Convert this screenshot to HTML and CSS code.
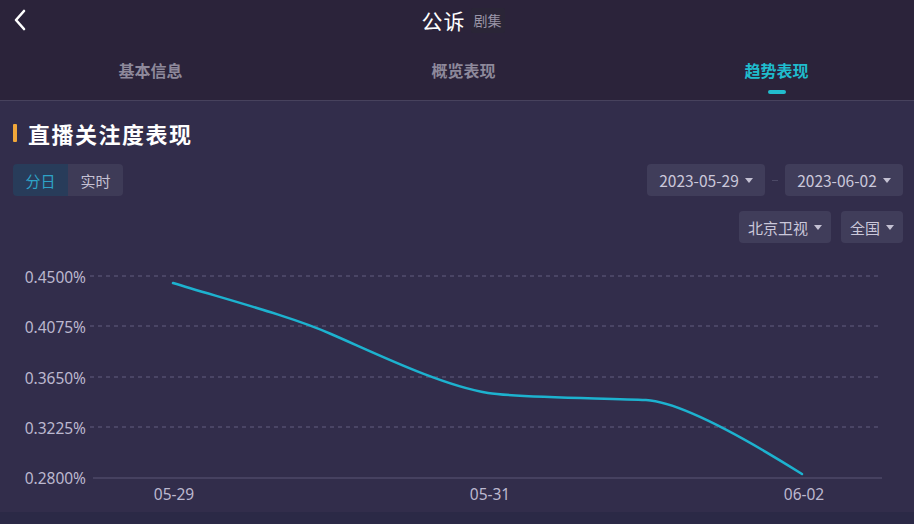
FILE: index.html
```html
<!DOCTYPE html>
<html lang="zh">
<head>
<meta charset="utf-8">
<title>公诉 趋势表现</title>
<link rel="stylesheet" href="styles.css">
</head>
<body>
<div class="page">
  <header class="topbar">
    <div class="nav">
      <div class="nav-left">
        <svg class="back" width="14" height="22" viewBox="0 0 14 22"><path d="M11 2 L3 11 L11 20" fill="none" stroke="#ffffff" stroke-width="2.6" stroke-linecap="round" stroke-linejoin="round"/></svg>
      </div>
      <div class="nav-title">
        <span class="title">公诉</span><span class="tag">剧集</span>
      </div>
      <div class="nav-right"></div>
    </div>
    <nav class="tabs">
      <div class="tab"><span class="tab-text">基本信息</span></div>
      <div class="tab"><span class="tab-text">概览表现</span></div>
      <div class="tab active"><span class="tab-text">趋势表现</span><span class="indicator"></span></div>
    </nav>
  </header>

  <main class="content">
    <h2 class="section-title"><span class="bar"></span>直播关注度表现</h2>

    <div class="row">
      <div class="segmented">
        <span class="seg active">分日</span>
        <span class="seg">实时</span>
      </div>
      <div class="pickers">
        <span class="picker date">2023-05-29<i class="caret"></i></span>
        <span class="dash"></span>
        <span class="picker date">2023-06-02<i class="caret"></i></span>
      </div>
    </div>

    <div class="row row2">
      <div class="pickers">
        <span class="picker">北京卫视<i class="caret"></i></span>
        <span class="picker">全国<i class="caret"></i></span>
      </div>
    </div>

    <svg class="chart" width="914" height="269" viewBox="0 0 914 269">
      <g class="grid">
        <line x1="90" y1="33" x2="882" y2="33"/>
        <line x1="90" y1="83" x2="882" y2="83"/>
        <line x1="90" y1="134" x2="882" y2="134"/>
        <line x1="90" y1="184" x2="882" y2="184"/>
      </g>
      <line class="axis" x1="93" y1="235" x2="882" y2="235"/>
      <g class="ylabels">
        <text x="86" y="40">0.4500%</text>
        <text x="86" y="90">0.4075%</text>
        <text x="86" y="141">0.3650%</text>
        <text x="86" y="191">0.3225%</text>
        <text x="86" y="241">0.2800%</text>
      </g>
      <g class="xlabels">
        <text x="174" y="257">05-29</text>
        <text x="490" y="257">05-31</text>
        <text x="804" y="257">06-02</text>
      </g>
      <path class="line" d="M173,40 C225,56 290,73 331,91 C375,110 440,142 488,150 C520,155 610,155 646,157 C680,159 740,192 802,231"/>
    </svg>
  </main>
  <div class="bottom"></div>
</div>
</body>
</html>
```

FILE: styles.css
```css
* { box-sizing: border-box; }
html, body { margin: 0; padding: 0; }
body {
  width: 914px;
  height: 524px;
  overflow: hidden;
  background: #322d4b;
  font-family: "Noto Sans CJK SC", "Noto Sans", sans-serif;
}
.page { width: 914px; height: 524px; display: flex; flex-direction: column; }

.topbar {
  background: #2b233a;
  border-bottom: 1px solid #47425d;
  height: 101px;
}
.nav {
  height: 44px;
  display: grid;
  grid-template-columns: 1fr auto 1fr;
  align-items: center;
}
.nav-left { padding-left: 13px; display: flex; align-items: center; padding-bottom: 4px; }
.back { display: block; }
.nav-title { display: flex; align-items: center; margin-left: 12px; padding-bottom: 4px; }
.title { color: #ffffff; font-size: 21px; line-height: 28px; letter-spacing: 1px; }
.tag {
  margin-left: 5px;
  background: #2a2537;
  color: #9a95a8;
  font-size: 14px;
  line-height: 25px;
  padding: 0 3px;
  border-radius: 2px;
}

.tabs {
  display: grid;
  grid-template-columns: repeat(3, 313px);
  margin-left: -6px;
  height: 56px;
}
.tab {
  display: flex;
  flex-direction: column;
  align-items: center;
  padding-top: 15px;
}
.tab-text { color: #8e899b; font-size: 16px; font-weight: 700; line-height: 22px; }
.tab.active .tab-text { color: #1fbccd; }
.indicator {
  margin-top: 9px;
  width: 18px;
  height: 4px;
  border-radius: 2px;
  background: #22bccd;
}

.content { flex: 1; display: flex; flex-direction: column; }
.section-title {
  margin: 17px 0 0 0;
  padding-left: 13px;
  height: 30px;
  display: flex;
  align-items: center;
  color: #ffffff;
  font-size: 22px;
  font-weight: 700;
  letter-spacing: 1.5px;
}
.bar {
  width: 4px;
  height: 18px;
  background: #f1a73a;
  margin-right: 11px;
  border-radius: 1px;
}

.row {
  margin-top: 16px;
  padding: 0 11px 0 13px;
  display: flex;
  justify-content: space-between;
  align-items: center;
  height: 32px;
}
.row2 { margin-top: 15px; justify-content: flex-end; }

.segmented { display: flex; height: 32px; border-radius: 4px; overflow: hidden; }
.seg {
  width: 55px;
  display: flex;
  align-items: center;
  justify-content: center;
  font-size: 15px;
  background: #3e3b57;
  color: #c5c1d4;
}
.seg.active { background: #283c5a; color: #2ea3c7; }

.pickers { display: flex; align-items: center; gap: 10px; }
.picker {
  height: 32px;
  display: flex;
  align-items: center;
  padding: 0 9px;
  background: #403d5a;
  border-radius: 4px;
  color: #cbc8da;
  font-size: 15px;
}
.picker.date { width: 118px; justify-content: center; padding: 0 4px; font-size: 15.5px; }
.caret {
  display: inline-block;
  width: 0;
  height: 0;
  margin-left: 6px;
  border-left: 4.5px solid transparent;
  border-right: 4.5px solid transparent;
  border-top: 5px solid #c4c1d3;
}
.dash { height: 1px; background: #4c4966; margin: 0 -3px; width: 6px; }

.chart { display: block; }
.grid line { stroke: #625e80; stroke-width: 1; stroke-dasharray: 4 4; }
.axis { stroke: #5b5776; stroke-width: 1; }
.ylabels text { fill: #bcb8cf; font-size: 15.5px; text-anchor: end; font-family: "Noto Sans", "Noto Sans CJK SC", sans-serif; }
.xlabels text { fill: #bcb8cf; font-size: 15.5px; text-anchor: middle; font-family: "Noto Sans", "Noto Sans CJK SC", sans-serif; }
.line { fill: none; stroke: #1db2cf; stroke-width: 2.5; stroke-linecap: round; }

.bottom { height: 12px; background: #2b2946; }
```
